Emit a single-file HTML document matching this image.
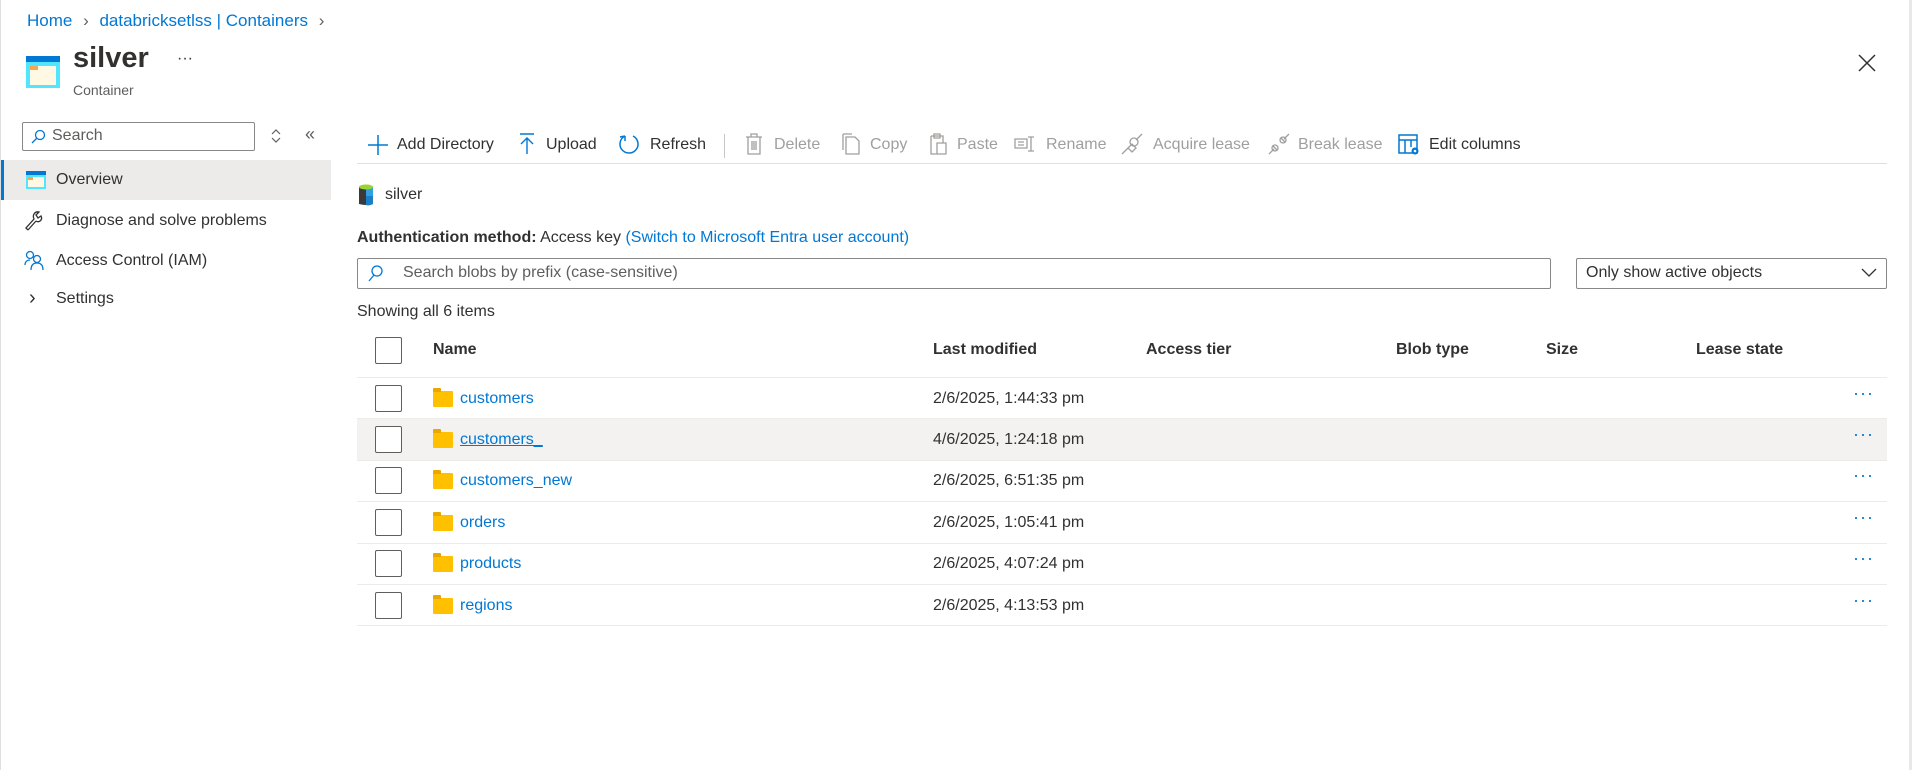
<!DOCTYPE html>
<html><head><style>
*{margin:0;padding:0;box-sizing:border-box}
body{width:1912px;height:770px;background:#fff;font-family:"Liberation Sans",sans-serif;font-size:16px;color:#323130;position:relative;overflow:hidden;border-left:1px solid #e1dfdd}
.a{position:absolute;white-space:nowrap}
.link{color:#0078d4}
.g{color:#a19f9d}
.cb{position:absolute;width:27px;height:27px;border:1.5px solid #605e5c;border-radius:2px;background:#fff}
.sep{position:absolute;left:356px;width:1530px;height:1px;background:#edebe9}
.fold{position:absolute;width:20px;height:16px;background:#ffc000;border-radius:1px}
.fold:before{content:"";position:absolute;left:0;top:-3px;width:8px;height:4px;background:#e8a800;border-radius:1px 1px 0 0}
.dots{position:absolute;left:1852px;color:#0078d4;font-size:18px;letter-spacing:1px}
</style></head><body>
<div style="position:absolute;right:0;top:0;width:3px;height:770px;background:#e8e8e8"></div>
<div class="a link" style="left:26px;top:11px;font-size:17px">Home <span style="color:#605e5c;margin:0 6px">&#x203A;</span> databricksetlss | Containers <span style="color:#605e5c;margin-left:6px">&#x203A;</span></div>
<svg class="a" style="left:25px;top:56px" width="34" height="32"><rect x="0" y="0" width="34" height="32" fill="#50e6ff"/><rect x="0" y="0" width="34" height="6" fill="#0078d4"/><rect x="4" y="10" width="26" height="19" fill="#fff9e3"/><rect x="4" y="10" width="8" height="4" fill="#f7a64c"/></svg>
<div class="a" style="left:72px;top:42px;font-size:29px;font-weight:bold;color:#323130">silver</div>
<div class="a" style="left:176px;top:50px;font-size:16px">···</div>
<div class="a" style="left:72px;top:82px;font-size:14px;color:#605e5c">Container</div>
<svg class="a" style="left:1856px;top:53px" width="20" height="20"><path d="M2 2L18 18M18 2L2 18" stroke="#323130" stroke-width="1.5"/></svg>
<div class="a" style="left:21px;top:122px;width:233px;height:29px;border:1px solid #8a8886;border-radius:2px"></div>
<svg class="a" style="left:29px;top:129px" width="16" height="16"><circle cx="10" cy="6" r="4.5" fill="none" stroke="#0078d4" stroke-width="1.3"/><path d="M7 9L2 14" stroke="#0078d4" stroke-width="1.3"/></svg>
<div class="a" style="left:51px;top:127px;color:#605e5c">Search</div>
<svg class="a" style="left:269px;top:128px" width="12" height="16"><path d="M2 6L6 2L10 6M2 10L6 14L10 10" fill="none" stroke="#605e5c" stroke-width="1.2"/></svg>
<div class="a" style="left:304px;top:124px;color:#605e5c;font-size:18px">«</div>
<div class="a" style="left:0;top:160px;width:330px;height:40px;background:#edebe9;border-left:3px solid #0078d4"></div>
<svg class="a" style="left:25px;top:171px" width="20" height="18"><rect width="20" height="18" fill="#50e6ff"/><rect width="20" height="4" fill="#0078d4"/><rect x="2" y="6" width="16" height="10" fill="#fff9e3"/><rect x="2" y="6" width="5" height="3" fill="#f7a64c"/></svg>
<div class="a" style="left:55px;top:171px">Overview</div>
<svg class="a" style="left:24px;top:210px" width="20" height="22"><path d="M3 20L11 11M3 20L1 18L9 9C7 5 10 1 14 2L11 5L13 8L16 6C18 10 14 13 11 11" fill="none" stroke="#323130" stroke-width="1.3"/></svg>
<div class="a" style="left:55px;top:212px">Diagnose and solve problems</div>
<svg class="a" style="left:23px;top:250px" width="22" height="22"><circle cx="6" cy="5" r="3.5" fill="none" stroke="#0078d4" stroke-width="1.3"/><circle cx="13" cy="9" r="3.5" fill="none" stroke="#0078d4" stroke-width="1.3"/><path d="M1 15C1 11 4 10 6 10M7 20C7 15 9 13 13 13C17 13 19 15 19 20" fill="none" stroke="#0078d4" stroke-width="1.3"/></svg>
<div class="a" style="left:55px;top:252px">Access Control (IAM)</div>
<div class="a" style="left:28px;top:287px;font-size:20px;color:#323130">&#x203A;</div>
<div class="a" style="left:55px;top:290px">Settings</div>
<svg class="a" style="left:366px;top:134px" width="22" height="22"><path d="M11 1V21M1 11H21" stroke="#0078d4" stroke-width="1.5"/></svg>
<div class="a" style="left:396px;top:136px">Add Directory</div>
<svg class="a" style="left:518px;top:133px" width="16" height="22"><path d="M1 1H15M8 5V21M2 11L8 5L14 11" fill="none" stroke="#0078d4" stroke-width="1.4"/></svg>
<div class="a" style="left:545px;top:136px">Upload</div>
<svg class="a" style="left:617px;top:133px" width="22" height="22"><path d="M7 3A9 9 0 1 0 15 3M7 3L7 8M7 3L2 4" fill="none" stroke="#0078d4" stroke-width="1.5"/></svg>
<div class="a" style="left:649px;top:136px">Refresh</div>
<div class="a" style="left:723px;top:134px;width:1px;height:24px;background:#c8c6c4"></div>
<svg class="a" style="left:744px;top:133px" width="18" height="22"><path d="M1 4H17M6 4V1H12V4M3 4V21H15V4M7 8V17M9 8V17M11 8V17" fill="none" stroke="#a19f9d" stroke-width="1.3"/></svg>
<div class="a g" style="left:773px;top:136px">Delete</div>
<svg class="a" style="left:840px;top:133px" width="20" height="22"><path d="M5 4H14L18 8V21H5ZM2 1H11M2 1V17" fill="none" stroke="#a19f9d" stroke-width="1.3"/></svg>
<div class="a g" style="left:869px;top:136px">Copy</div>
<svg class="a" style="left:927px;top:133px" width="20" height="22"><path d="M3 3H15V10M3 3V21H9M9 10H18V21H9ZM6 1H12V5H6Z" fill="none" stroke="#a19f9d" stroke-width="1.3"/></svg>
<div class="a g" style="left:956px;top:136px">Paste</div>
<svg class="a" style="left:1013px;top:136px" width="22" height="16"><path d="M1 3H13V12H1ZM4 6H10M4 9H10M17 1V15M14 1H20M14 15H20" fill="none" stroke="#a19f9d" stroke-width="1.3"/></svg>
<div class="a g" style="left:1045px;top:136px">Rename</div>
<svg class="a" style="left:1120px;top:133px" width="22" height="22"><path d="M1 21L7 15M7 15L11 11L15 15L11 19ZM15 7L21 1" fill="none" stroke="#a19f9d" stroke-width="1.3"/><circle cx="13" cy="9" r="4" fill="none" stroke="#a19f9d" stroke-width="1.3"/></svg>
<div class="a g" style="left:1152px;top:136px">Acquire lease</div>
<svg class="a" style="left:1267px;top:133px" width="22" height="22"><path d="M1 21L6 16M16 6L21 1M5 13L9 17M13 5L17 9" fill="none" stroke="#a19f9d" stroke-width="1.3"/><circle cx="7" cy="15" r="3" fill="none" stroke="#a19f9d" stroke-width="1.3"/><circle cx="15" cy="7" r="3" fill="none" stroke="#a19f9d" stroke-width="1.3"/></svg>
<div class="a g" style="left:1297px;top:136px">Break lease</div>
<svg class="a" style="left:1397px;top:134px" width="22" height="22"><path d="M1 1H19V19H1ZM1 6H19M7 6V19M13 6V13" fill="none" stroke="#0078d4" stroke-width="1.5"/><circle cx="17" cy="17" r="3.5" fill="#0078d4"/><circle cx="17" cy="17" r="1.3" fill="#fff"/></svg>
<div class="a" style="left:1428px;top:136px">Edit columns</div>
<div class="a" style="left:356px;top:163px;width:1530px;height:1px;background:#e1dfdd"></div>
<svg class="a" style="left:358px;top:184px" width="14" height="22"><path d="M0 3H14V20Q7 22 0 20Z" fill="#3b3a39"/><path d="M7 3H14V20Q10 22 7 21Z" fill="#32a0e0"/><path d="M7 12H14V20Q10 22 7 21Z" fill="#1a7fc9"/><ellipse cx="7" cy="3" rx="7" ry="2.5" fill="#9bd42f"/></svg>
<div class="a" style="left:384px;top:186px">silver</div>
<div class="a" style="left:356px;top:229px"><span style="font-weight:bold;color:#323130">Authentication method:</span> Access key <span class="link">(Switch to Microsoft Entra user account)</span></div>
<div class="a" style="left:356px;top:258px;width:1194px;height:31px;border:1px solid #8a8886;border-radius:2px"></div>
<svg class="a" style="left:366px;top:265px" width="16" height="18"><circle cx="10" cy="6" r="5" fill="none" stroke="#0078d4" stroke-width="1.3"/><path d="M7 10L2 16" stroke="#0078d4" stroke-width="1.3"/></svg>
<div class="a" style="left:402px;top:264px;color:#605e5c">Search blobs by prefix (case-sensitive)</div>
<div class="a" style="left:1575px;top:258px;width:311px;height:31px;border:1px solid #8a8886;border-radius:2px"></div>
<div class="a" style="left:1585px;top:264px">Only show active objects</div>
<svg class="a" style="left:1860px;top:268px" width="16" height="10"><path d="M1 1L8 8L15 1" fill="none" stroke="#323130" stroke-width="1.3"/></svg>
<div class="a" style="left:356px;top:303px">Showing all 6 items</div>
<div class="cb" style="left:374px;top:337px"></div>
<div class="a" style="left:432px;top:341px;font-weight:bold">Name</div>
<div class="a" style="left:932px;top:341px;font-weight:bold">Last modified</div>
<div class="a" style="left:1145px;top:341px;font-weight:bold">Access tier</div>
<div class="a" style="left:1395px;top:341px;font-weight:bold">Blob type</div>
<div class="a" style="left:1545px;top:341px;font-weight:bold">Size</div>
<div class="a" style="left:1695px;top:341px;font-weight:bold">Lease state</div>
<div class="sep" style="top:377px"></div>
<div class="a" style="left:356px;top:418px;width:1530px;height:42px;background:#f3f2f1"></div>
<div class="sep" style="top:418px"></div>
<div class="sep" style="top:460px"></div>
<div class="sep" style="top:501px"></div>
<div class="sep" style="top:543px"></div>
<div class="sep" style="top:584px"></div>
<div class="sep" style="top:625px"></div>

<div class="cb" style="left:374px;top:385px"></div><div class="fold" style="left:432px;top:391px"></div>
<div class="a link" style="left:459px;top:390px">customers</div><div class="a" style="left:932px;top:390px">2/6/2025, 1:44:33 pm</div><div class="dots" style="top:383px">···</div>

<div class="cb" style="left:374px;top:426px"></div><div class="fold" style="left:432px;top:432px"></div>
<div class="a link" style="left:459px;top:431px;text-decoration:underline">customers_</div><div class="a" style="left:932px;top:431px">4/6/2025, 1:24:18 pm</div><div class="dots" style="top:424px">···</div>

<div class="cb" style="left:374px;top:467px"></div><div class="fold" style="left:432px;top:473px"></div>
<div class="a link" style="left:459px;top:472px">customers_new</div><div class="a" style="left:932px;top:472px">2/6/2025, 6:51:35 pm</div><div class="dots" style="top:465px">···</div>

<div class="cb" style="left:374px;top:509px"></div><div class="fold" style="left:432px;top:515px"></div>
<div class="a link" style="left:459px;top:514px">orders</div><div class="a" style="left:932px;top:514px">2/6/2025, 1:05:41 pm</div><div class="dots" style="top:507px">···</div>

<div class="cb" style="left:374px;top:550px"></div><div class="fold" style="left:432px;top:556px"></div>
<div class="a link" style="left:459px;top:555px">products</div><div class="a" style="left:932px;top:555px">2/6/2025, 4:07:24 pm</div><div class="dots" style="top:548px">···</div>

<div class="cb" style="left:374px;top:592px"></div><div class="fold" style="left:432px;top:598px"></div>
<div class="a link" style="left:459px;top:597px">regions</div><div class="a" style="left:932px;top:597px">2/6/2025, 4:13:53 pm</div><div class="dots" style="top:590px">···</div>
</body></html>
